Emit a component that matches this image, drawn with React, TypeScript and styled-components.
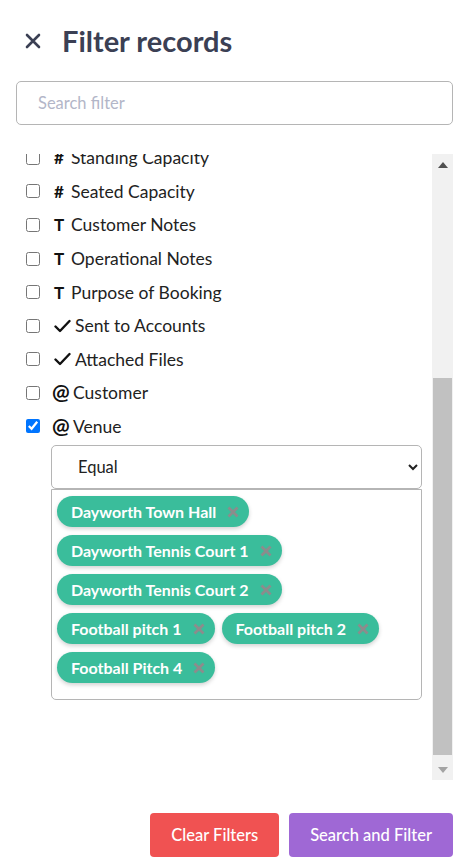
import { useEffect, useRef } from "react";
import styled, { createGlobalStyle } from "styled-components";

type FieldKind = "number" | "text" | "bool" | "link" | "date";

type Field = {
  label: string;
  kind: FieldKind;
  checked?: boolean;
};

const fields: Field[] = [
  { label: "Booking Reference", kind: "text" },
  { label: "Booking Status", kind: "text" },
  { label: "Start Date", kind: "date" },
  { label: "End Date", kind: "date" },
  { label: "Created At", kind: "date" },
  { label: "Total Price", kind: "number" },
  { label: "Deposit Amount", kind: "number" },
  { label: "Attendees", kind: "number" },
  { label: "Room Capacity", kind: "number" },
  { label: "Maximum Capacity", kind: "number" },
  { label: "Standing Capacity", kind: "number" },
  { label: "Seated Capacity", kind: "number" },
  { label: "Customer Notes", kind: "text" },
  { label: "Operational Notes", kind: "text" },
  { label: "Purpose of Booking", kind: "text" },
  { label: "Sent to Accounts", kind: "bool" },
  { label: "Attached Files", kind: "bool" },
  { label: "Customer", kind: "link" },
  { label: "Venue", kind: "link", checked: true },
];

const venues = [
  "Dayworth Town Hall",
  "Dayworth Tennis Court 1",
  "Dayworth Tennis Court 2",
  "Football pitch 1",
  "Football pitch 2",
  "Football Pitch 4",
];

const GlobalStyle = createGlobalStyle`
  * {
    box-sizing: border-box;
  }
  body {
    margin: 0;
    background: #ffffff;
    font-family: Lato, "Open Sans", sans-serif;
    color: #222222;
  }
`;

const FieldIcon = ({ kind }: { kind: FieldKind }) => {
  if (kind === "bool") {
    return (
      <IconBox>
        <svg width="17" height="14" viewBox="0 0 17 14">
          <path
            d="M1.5 7.5 L6 12 L15.5 2"
            fill="none"
            stroke="#111"
            strokeWidth="2.4"
            strokeLinecap="round"
            strokeLinejoin="round"
          />
        </svg>
      </IconBox>
    );
  }
  if (kind === "link") return <AtGlyph>@</AtGlyph>;
  if (kind === "number") return <IconGlyph>#</IconGlyph>;
  if (kind === "date") return <IconGlyph>◷</IconGlyph>;
  return <IconGlyph>T</IconGlyph>;
};

const App = () => {
  const listRef = useRef<HTMLDivElement>(null);

  useEffect(() => {
    const el = listRef.current;
    if (el) el.scrollTop = el.scrollHeight;
  }, []);

  return (
    <Panel>
      <GlobalStyle />
      <Header>
        <CloseButton aria-label="Close">
          <svg width="16" height="16" viewBox="0 0 16 16">
            <path
              d="M2 2 L14 14 M14 2 L2 14"
              stroke="#3b4054"
              strokeWidth="2.6"
              strokeLinecap="round"
            />
          </svg>
        </CloseButton>
        <Title>Filter records</Title>
      </Header>

      <SearchInput placeholder="Search filter" />

      <ListArea>
        <FieldList ref={listRef}>
          {fields.map((field) => (
            <div key={field.label}>
              <FieldRow>
                <Checkbox type="checkbox" defaultChecked={field.checked} />
                <FieldIcon kind={field.kind} />
                <FieldLabel>{field.label}</FieldLabel>
              </FieldRow>
              {field.checked && (
                <Condition>
                  <OperatorSelect defaultValue="equal">
                    <option value="equal">Equal</option>
                    <option value="not">Not equal</option>
                  </OperatorSelect>
                  <TagBox>
                    {venues.map((venue) => (
                      <Tag key={venue}>
                        {venue}
                        <TagRemove>
                          <svg width="12" height="12" viewBox="0 0 12 12">
                            <path
                              d="M1.5 1.5 L10.5 10.5 M10.5 1.5 L1.5 10.5"
                              stroke="#8c8c8c"
                              strokeWidth="2.8"
                            />
                          </svg>
                        </TagRemove>
                      </Tag>
                    ))}
                  </TagBox>
                </Condition>
              )}
            </div>
          ))}
        </FieldList>

        <ScrollRail>
          <RailButton>
            <svg width="10" height="6" viewBox="0 0 10 6">
              <polygon points="5,0 10,6 0,6" fill="#505050" />
            </svg>
          </RailButton>
          <RailTrack>
            <RailThumb />
          </RailTrack>
          <RailButton>
            <svg width="10" height="6" viewBox="0 0 10 6">
              <polygon points="0,0 10,0 5,6" fill="#a3a3a3" />
            </svg>
          </RailButton>
        </ScrollRail>
      </ListArea>

      <Footer>
        <ActionButton $tone="#f05252">Clear Filters</ActionButton>
        <ActionButton $tone="#9f68d5">Search and Filter</ActionButton>
      </Footer>
    </Panel>
  );
};

export default App;

const Panel = styled.div`
  width: 460px;
  height: 863px;
  padding: 0 7px 0 16px;
  display: flex;
  flex-direction: column;
`;

const Header = styled.div`
  height: 81px;
  padding: 0 0 0 9px;
  display: flex;
  flex-direction: row;
  align-items: center;
  gap: 21px;
`;

const CloseButton = styled.button`
  border: none;
  background: none;
  padding: 0;
  width: 16px;
  height: 16px;
  display: flex;
`;

const Title = styled.h1`
  margin: 0;
  font-size: 29px;
  font-weight: 700;
  color: #3b4054;
`;

const SearchInput = styled.input`
  width: 100%;
  height: 44px;
  flex-shrink: 0;
  border: 1px solid #b5b5b5;
  border-radius: 5px;
  padding: 0 21px;
  font-family: inherit;
  font-size: 16.5px;
  color: #333;
  outline: none;

  &::placeholder {
    color: #b3b6c8;
  }
`;

const ListArea = styled.div`
  margin-top: 29px;
  height: 626px;
  flex-shrink: 0;
  display: flex;
  flex-direction: row;
`;

const FieldList = styled.div`
  flex: 1;
  overflow: hidden;
  padding-bottom: 80px;
`;

const ScrollRail = styled.div`
  width: 21px;
  background: #f1f1f1;
  display: flex;
  flex-direction: column;
`;

const RailButton = styled.div`
  height: 21px;
  display: flex;
  align-items: center;
  justify-content: center;
`;

const RailTrack = styled.div`
  flex: 1;
  padding: 203px 1px 4px;
  display: flex;
`;

const RailThumb = styled.div`
  flex: 1;
  background: #c1c1c1;
`;

const FieldRow = styled.label`
  height: 33.6px;
  padding-left: 9px;
  display: flex;
  flex-direction: row;
  align-items: center;
`;

const Checkbox = styled.input`
  width: 14px;
  height: 14px;
  margin: 0 14px 0 1px;
`;

const IconGlyph = styled.span`
  width: 17px;
  font-size: 17px;
  font-weight: 700;
  color: #111;
`;

const AtGlyph = styled.span`
  width: 21px;
  margin: -4px 0 0 -2px;
  font-size: 21px;
  font-weight: 700;
  color: #111;
`;

const IconBox = styled.span`
  width: 21px;
  display: flex;
  align-items: center;
`;

const FieldLabel = styled.span`
  font-size: 17.5px;
  color: #222;
`;

const Condition = styled.div`
  margin: 2px 10px 0 35px;
  display: flex;
  flex-direction: column;
`;

const OperatorSelect = styled.select`
  height: 44px;
  border: 1px solid #b5b5b5;
  border-radius: 5px;
  padding: 0 6px 0 22px;
  font-family: inherit;
  font-size: 16.5px;
  color: #222;
  background: #fff;
`;

const TagBox = styled.div`
  height: 211px;
  border: 1px solid #b5b5b5;
  border-radius: 0 0 5px 5px;
  padding: 6px 5px;
  display: flex;
  flex-wrap: wrap;
  align-content: flex-start;
  gap: 8px 7px;
`;

const Tag = styled.span`
  height: 31px;
  padding: 0 10px 0 14px;
  border-radius: 16px;
  background: #3abd9b;
  color: #ffffff;
  font-size: 16px;
  font-weight: 700;
  display: inline-flex;
  align-items: center;
  gap: 11px;
  box-shadow: 0 2px 4px rgba(0, 0, 0, 0.18);
`;

const TagRemove = styled.span`
  display: flex;
`;

const Footer = styled.div`
  margin-top: 33px;
  display: flex;
  flex-direction: row;
  justify-content: flex-end;
  gap: 10px;
`;

const ActionButton = styled.button<{ $tone: string }>`
  height: 44px;
  padding: 0 21px;
  border: none;
  border-radius: 4px;
  background: ${(p) => p.$tone};
  color: #ffffff;
  font-family: inherit;
  font-size: 16.5px;
  font-weight: 500;
`;
